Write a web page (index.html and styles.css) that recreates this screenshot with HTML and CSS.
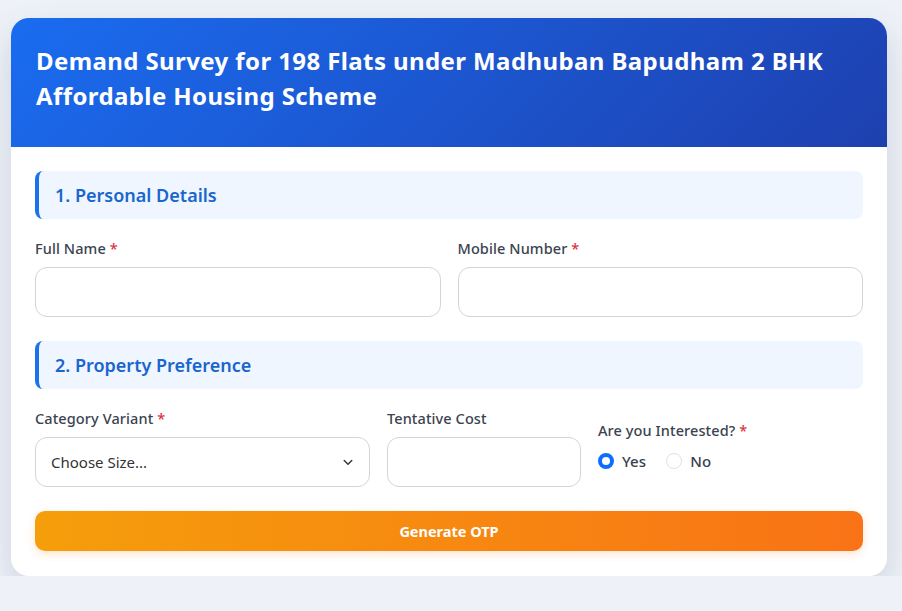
FILE: index.html
```html
<!DOCTYPE html>
<html lang="en">
<head>
    <meta charset="UTF-8">
    <meta name="viewport" content="width=device-width, initial-scale=1.0">
    <title>Demand Survey</title>
    <link rel="stylesheet" href="styles.css">
</head>
<body>
    <div class="card">
        <div class="card-header">
            <h1>Demand Survey for 198 Flats under Madhuban Bapudham 2 BHK Affordable Housing Scheme</h1>
        </div>
        <form class="card-body" onsubmit="return false;">
            <div class="section-title">1. Personal Details</div>
            <div class="row row-2">
                <div class="field">
                    <label>Full Name <span class="req">*</span></label>
                    <input type="text">
                </div>
                <div class="field">
                    <label>Mobile Number <span class="req">*</span></label>
                    <input type="tel">
                </div>
            </div>

            <div class="section-title">2. Property Preference</div>
            <div class="row row-3">
                <div class="field">
                    <label>Category Variant <span class="req">*</span></label>
                    <div class="select-wrap">
                        <select>
                            <option>Choose Size...</option>
                        </select>
                        <svg class="chevron" width="12" height="12" viewBox="0 0 16 16"><path d="M3 6l5 5 5-5" fill="none" stroke="#343a40" stroke-width="2" stroke-linecap="round" stroke-linejoin="round"/></svg>
                    </div>
                </div>
                <div class="field">
                    <label>Tentative Cost</label>
                    <input type="text">
                </div>
                <div class="field field-radio">
                    <label>Are you Interested? <span class="req">*</span></label>
                    <div class="radios">
                        <label class="radio"><span class="dot checked"></span>Yes</label>
                        <label class="radio"><span class="dot"></span>No</label>
                    </div>
                </div>
            </div>

            <button class="btn">Generate OTP</button>
        </form>
    </div>
</body>
</html>
```

FILE: styles.css
```css
body {
    font-family: "Noto Sans", "Open Sans", sans-serif;
    background: #eef2f8;
    margin: 0;
    padding: 18px 15px 0 11px;
    color: #374151;
}
.card {
    background: white;
    border-radius: 18px;
    overflow: hidden;
    box-shadow: 0 14px 34px rgba(30, 50, 90, 0.16);
}
.card-header {
    background: linear-gradient(135deg, #1a6cf0, #1e40af);
    padding: 25px 25px 31px;
    height: 73px;
}
.card-header h1 {
    margin: 0;
    color: white;
    font-size: 24px;
    letter-spacing: 0.4px;
    line-height: 35px;
    font-weight: 700;
}
.card-body {
    padding: 24px 24px 25px;
}
.section-title {
    background: #eff6ff;
    border-left: 4px solid #1a73e8;
    border-radius: 8px;
    height: 48px;
    display: flex;
    align-items: center;
    padding-left: 16px;
    color: #1a66cc;
    font-size: 18px;
    font-weight: 600;
    margin-bottom: 19px;
}
.row {
    display: grid;
    gap: 17px;
    margin-bottom: 24px;
}
.row-2 {
    grid-template-columns: 1fr 1fr;
}
.row-3 {
    grid-template-columns: 335fr 194fr 265fr;
    align-items: center;
}
.field label {
    display: block;
    font-size: 14.5px;
    font-weight: 500;
    letter-spacing: 0.1px;
    color: #3b4350;
    margin-bottom: 9px;
    line-height: 20px;
}
.req {
    color: #dc3545;
    font-weight: 500;
}
input, select {
    width: 100%;
    box-sizing: border-box;
    height: 50px;
    border: 1px solid #d1d5db;
    border-radius: 12px;
    font-family: inherit;
    font-size: 15px;
    padding: 0 15px;
    background: white;
    color: #333;
}
.select-wrap {
    position: relative;
}
select {
    appearance: none;
    -webkit-appearance: none;
}
.chevron {
    position: absolute;
    right: 16px;
    top: 19px;
    pointer-events: none;
}
.field-radio {
    margin-bottom: 4px;
}
.field-radio label {
    margin-bottom: 11px;
}
.radios {
    display: flex;
    gap: 20px;
}
.field-radio .radio {
    display: flex;
    align-items: center;
    gap: 8px;
    margin: 0;
    font-size: 15px;
    font-weight: 500;
    color: #374151;
}
.dot {
    width: 16px;
    height: 16px;
    box-sizing: border-box;
    border-radius: 50%;
    border: 1px solid #dee2e6;
    background: white;
}
.dot.checked {
    border: 4px solid #0d6efd;
}
.btn {
    width: 100%;
    height: 40px;
    border: none;
    border-radius: 10px;
    background: linear-gradient(90deg, #f59e0b, #f97316);
    color: white;
    font-family: inherit;
    font-size: 14.5px;
    font-weight: 700;
    cursor: pointer;
    box-shadow: 0 3px 8px rgba(249, 115, 22, 0.2);
}
```
